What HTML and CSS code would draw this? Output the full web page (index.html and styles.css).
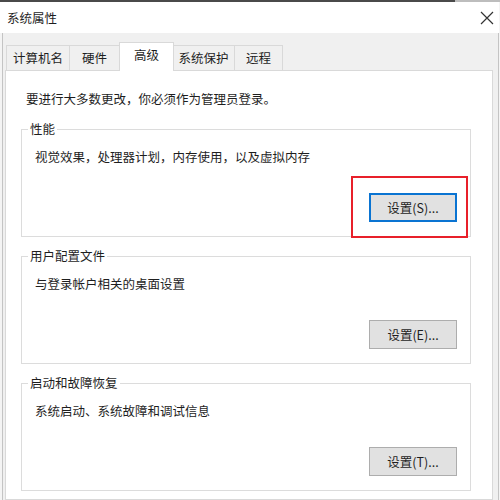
FILE: index.html
```html
<!DOCTYPE html>
<html lang="zh-CN">
<head>
<meta charset="utf-8">
<link rel="stylesheet" href="styles.css">
</head>
<body>
<div class="window">
  <div class="topline"></div>
  <div class="titlebar">
    <span class="title">系统属性</span>
    <svg class="close" width="14" height="14" viewBox="0 0 14 14"><path d="M1 1 L13 13 M13 1 L1 13" stroke="#333" stroke-width="1.2" fill="none"/></svg>
  </div>
  <div class="client">
    <div class="tabs">
      <div class="tab t1">计算机名</div>
      <div class="tab t2">硬件</div>
      <div class="tab active t3">高级</div>
      <div class="tab t4">系统保护</div>
      <div class="tab t5">远程</div>
    </div>
    <div class="panel">
      <div class="note">要进行大多数更改，你必须作为管理员登录。</div>
      <div class="group g1">
        <div class="legend">性能</div>
        <div class="desc">视觉效果，处理器计划，内存使用，以及虚拟内存</div>
        <div class="btnrow"><div class="btn focus">设置(S)...</div></div>
        <div class="highlight"></div>
      </div>
      <div class="group">
        <div class="legend">用户配置文件</div>
        <div class="desc">与登录帐户相关的桌面设置</div>
        <div class="btnrow"><div class="btn">设置(E)...</div></div>
      </div>
      <div class="group">
        <div class="legend">启动和故障恢复</div>
        <div class="desc">系统启动、系统故障和调试信息</div>
        <div class="btnrow"><div class="btn">设置(T)...</div></div>
      </div>
    </div>
  </div>
</div>
</body>
</html>
```

FILE: styles.css
```css
html, body {
  margin: 0;
  padding: 0;
}
body {
  width: 500px;
  height: 500px;
  overflow: hidden;
  background: #f4f4f4;
  font-family: "Noto Sans CJK SC", "Microsoft YaHei", sans-serif;
  font-size: 12.5px;
  color: #1e1e1e;
}
.window {
  width: 495px;
  height: 500px;
  margin-left: 2px;
  border-left: 1px solid #c4c4c4;
  border-right: 1px solid #c4c4c4;
  background: #f0f0f0;
  display: flex;
  flex-direction: column;
}
.topline {
  height: 2px;
  margin-left: -3px;
  margin-right: -4px;
  background: linear-gradient(to right, #4a4a4a 455px, #bdbdbd 455px);
}
.titlebar {
  height: 31px;
  background: #fff;
  display: flex;
  align-items: center;
  justify-content: space-between;
  padding: 0 5px 0 4px;
  margin-left: -3px;
  margin-right: -1px;
}
.title {
  padding-left: 3px;
  line-height: 18px;
}
.close {
  display: block;
}
.client {
  padding: 9px 0 0 2px;
  flex: 1;
  display: flex;
  flex-direction: column;
}
.tabs {
  display: flex;
  align-items: flex-end;
  height: 28px;
  padding-left: 1px;
  position: relative;
  z-index: 1;
}
.tab {
  height: 25px;
  box-sizing: border-box;
  border: 1px solid #d9d9d9;
  border-bottom: none;
  background: #f0f0f0;
  display: flex;
  align-items: center;
  justify-content: center;
  line-height: 18px;
  padding-bottom: 1px;
}
.t1 { width: 64px; }
.t2 { width: 50px; border-left: none; }
.t3 { width: 55px; }
.t4 { width: 62px; border-left: none; }
.t5 { width: 48px; border-left: none; }
.tab.active {
  height: 29px;
  margin: 0 -1px -1px -1px;
  background: #fff;
  padding-bottom: 4px;
  position: relative;
}
.panel {
  flex: 1;
  width: 488px;
  box-sizing: border-box;
  background: #fff;
  border: 1px solid #d9d9d9;
  padding: 19px 21px 0 15px;
}
.note {
  line-height: 18px;
  padding-left: 5px;
}
.group {
  margin-top: 19px;
  border: 1px solid #dcdcdc;
  padding: 0 0 14px 0;
  position: relative;
}
.g1 {
  margin-top: 21px;
}
.legend {
  margin: -10px 0 0 6px;
  padding: 0 2px;
  width: fit-content;
  background: #fff;
  line-height: 18px;
}
.desc {
  margin-top: 10px;
  padding-left: 13px;
  line-height: 18px;
}
.btnrow {
  margin-top: 27px;
  display: flex;
  justify-content: flex-end;
  padding-right: 13px;
}
.btn {
  width: 88px;
  height: 29px;
  box-sizing: border-box;
  border: 1px solid #adadad;
  background: #e1e1e1;
  display: flex;
  align-items: center;
  justify-content: center;
  line-height: 18px;
}
.btn.focus {
  border: 2px solid #0a74d2;
}
.highlight {
  position: absolute;
  left: 329px;
  top: 46px;
  width: 117px;
  height: 62px;
  box-sizing: border-box;
  border: 2px solid #e8202a;
}
```
